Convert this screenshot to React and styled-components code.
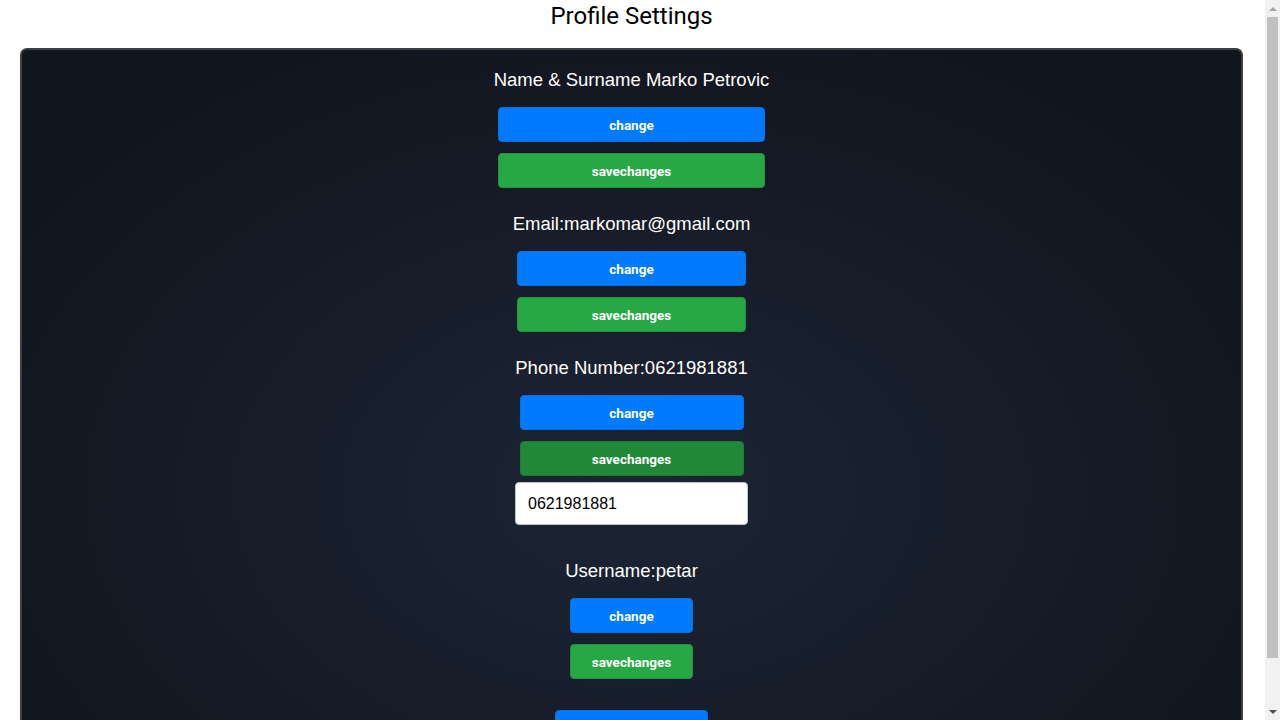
import React from "react";
import styled, { createGlobalStyle } from "styled-components";

const Global = createGlobalStyle`
  html, body { margin: 0; padding: 0; background: #fff; }
  body { font-family: "Liberation Sans", Arial, sans-serif; padding-right: 15px; }
`;

const Page = styled.div`
  display: flex;
  flex-direction: column;
  padding: 0 22px 8px 20px;
`;

const Title = styled.h1`
  margin: 0;
  height: 48px;
  padding-top: 1px;
  box-sizing: border-box;
  font-family: Roboto, "Liberation Sans", sans-serif;
  font-weight: 400;
  font-size: 24px;
  line-height: 30px;
  color: #000;
  text-align: center;
`;

const Card = styled.div`
  border: 2px solid #3d3f44;
  border-radius: 7px;
  background: radial-gradient(ellipse 60% 70% at 50% 62%, #1c2434 0%, #161c28 55%, #11151e 100%);
  display: flex;
  flex-direction: column;
  align-items: center;
  padding: 18px 0 15px;
`;

const Section = styled.div`
  display: flex;
  flex-direction: column;
  align-items: stretch;
  margin-bottom: ${(p) => p.$mb ?? 24}px;
`;

const Heading = styled.h3`
  margin: 0 0 15px;
  font-family: "Liberation Sans", Arial, sans-serif;
  font-weight: 400;
  font-size: 18.5px;
  line-height: 24px;
  color: #fff;
  text-align: center;
  white-space: nowrap;
`;

const Button = styled.button`
  margin: 0 4.5px ${(p) => (p.$last ? 0 : 11)}px;
  height: 35px;
  border: 1px solid ${(p) => p.$border};
  border-radius: 4px;
  background: ${(p) => p.$bg};
  color: #fff;
  font-family: Roboto, "Liberation Sans", sans-serif;
  font-weight: 700;
  font-size: 13.5px;
  cursor: pointer;
  padding: 0;
`;

const Input = styled.input`
  margin-top: -5px;
  height: 43px;
  box-sizing: border-box;
  border: 1px solid #bfc3c8;
  border-radius: 4px;
  background: #fff;
  padding: 0 12px;
  font-family: "Liberation Sans", Arial, sans-serif;
  font-size: 16px;
  color: #000;
  outline: none;
`;

const WideButton = styled(Button)`
  width: 153px;
  margin: 0;
`;

/* Fake classic scrollbar drawn over the right edge of the window */
const ScrollTrack = styled.div`
  position: fixed;
  top: 0;
  right: 0;
  width: 15px;
  height: 100vh;
  background: #f1f1f1;
  display: flex;
  flex-direction: column;
  align-items: center;
`;

const Arrow = styled.div`
  height: 17px;
  width: 15px;
  flex: none;
  display: flex;
  align-items: center;
  justify-content: center;
  ${(p) => (p.$down ? "margin-top: auto;" : "")}
  & > span {
    width: 0;
    height: 0;
    border-left: 4px solid transparent;
    border-right: 4px solid transparent;
    ${(p) =>
      p.$down
        ? "border-top: 4px solid #505050;"
        : "border-bottom: 4px solid #a3a3a3;"}
  }
`;

const Thumb = styled.div`
  width: 11px;
  height: 641px;
  flex: none;
  background: #c1c1c1;
  margin-left: 0;
`;

const BLUE = { $bg: "#007bff", $border: "#0a6fe0" };
const GREEN = { $bg: "#28a745", $border: "#23923d" };
const GREEN_DARK = { $bg: "#218838", $border: "#1e7b33" };

function Field({ label, children, mb, dark }) {
  return (
    <Section $mb={mb}>
      <Heading>{label}</Heading>
      <Button {...BLUE}>change</Button>
      <Button {...(dark ? GREEN_DARK : GREEN)} $last={!children}>
        savechanges
      </Button>
      {children}
    </Section>
  );
}

export default function App() {
  return (
    <>
      <Global />
      <Page>
        <Title>Profile Settings</Title>
        <Card>
          <Field label="Name & Surname Marko Petrovic" />
          <Field label="Email:markomar@gmail.com" />
          <Field label="Phone Number:0621981881" dark mb={34}>
            <Input defaultValue="0621981881" />
          </Field>
          <Field label="Username:petar" mb={31} />
          <WideButton {...BLUE}>delete account</WideButton>
        </Card>
      </Page>
      <ScrollTrack>
        <Arrow>
          <span />
        </Arrow>
        <Thumb />
        <Arrow $down>
          <span />
        </Arrow>
      </ScrollTrack>
    </>
  );
}
